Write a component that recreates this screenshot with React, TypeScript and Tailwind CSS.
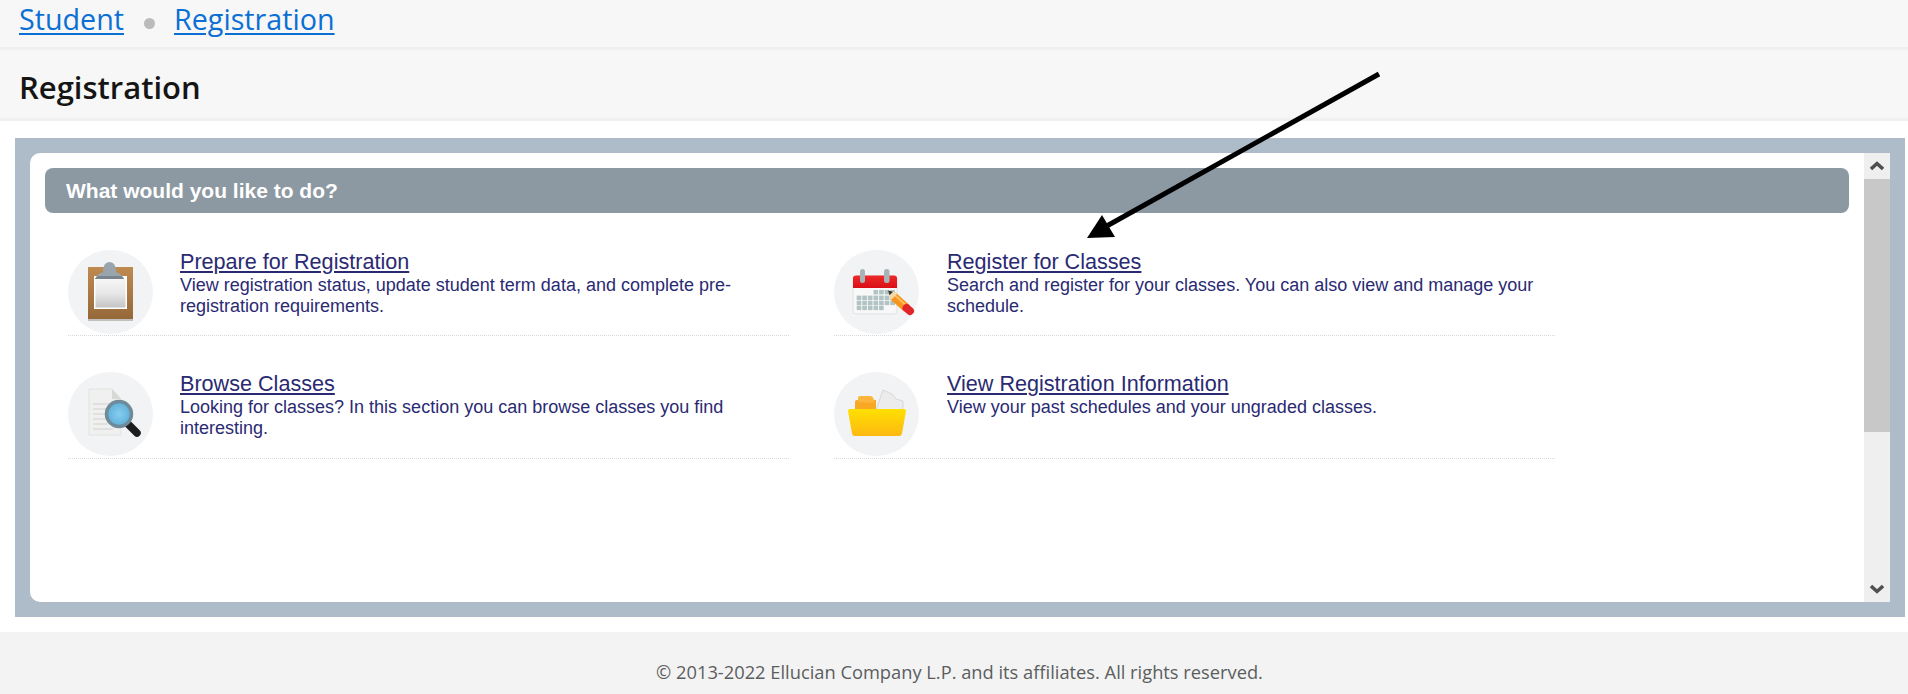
const items = [
  {
    title: "Prepare for Registration",
    desc: "View registration status, update student term data, and complete pre-registration requirements.",
    icon: "clipboard",
  },
  {
    title: "Register for Classes",
    desc: "Search and register for your classes. You can also view and manage your schedule.",
    icon: "calendar",
  },
  {
    title: "Browse Classes",
    desc: "Looking for classes? In this section you can browse classes you find interesting.",
    icon: "browse",
  },
  {
    title: "View Registration Information",
    desc: "View your past schedules and your ungraded classes.",
    icon: "folder",
  },
];

function ClipboardIcon() {
  return (
    <svg viewBox="0 0 85 84" className="w-[85px] h-[84px]">
      <defs>
        <linearGradient id="board" x1="0" y1="0" x2="0" y2="1">
          <stop offset="0" stopColor="#c08a50" />
          <stop offset="1" stopColor="#95683a" />
        </linearGradient>
        <linearGradient id="paper" x1="0" y1="0" x2="0" y2="1">
          <stop offset="0" stopColor="#f8f8f8" />
          <stop offset="0.55" stopColor="#e6e6e6" />
          <stop offset="1" stopColor="#c4c4c4" />
        </linearGradient>
      </defs>
      <rect x="20" y="69" width="45" height="2" fill="#8a8478" opacity="0.45" />
      <rect x="20" y="17" width="45" height="52" fill="url(#board)" />
      <rect x="26" y="26" width="33" height="33" fill="#fff" />
      <rect x="27.5" y="27.5" width="30" height="30" fill="url(#paper)" />
      <path d="M27 29 Q29 24 35 22 Q35 12 41.500 12 Q48 12 48 22 Q54 24 56 29 Z" fill="#99a4ad" />
      <path d="M27 29 Q28 27 30 26 H53 Q55 27 56 29 Z" fill="#79848d" />
    </svg>
  );
}

function BrowseIcon() {
  return (
    <svg viewBox="0 0 85 84" className="w-[85px] h-[84px]">
      <defs>
        <radialGradient id="lens">
          <stop offset="0" stopColor="#86cdf0" />
          <stop offset="1" stopColor="#5eaed8" />
        </radialGradient>
      </defs>
      <path d="M21 17 H44 L53 27 V63 H21 Z" fill="#eff0ef" stroke="#e2e2e0" strokeWidth="1" />
      <path d="M44 17 V27 H53 Z" fill="#d7d8d6" />
      <path d="M25 32 H45 M25 37 H40 M25 42 H38 M25 47 H38 M25 52 H40 M25 57 H45" stroke="#dcdcda" strokeWidth="1.500" />
      <path d="M60 52 L69 61" stroke="#1d1d1d" strokeWidth="7.500" strokeLinecap="round" />
      <circle cx="51" cy="42" r="12.500" fill="url(#lens)" stroke="#6f8a98" strokeWidth="3.500" />
    </svg>
  );
}

const calendarRows = [
  { y: 40, from: 3, to: 6 },
  { y: 45.6, from: 0, to: 6 },
  { y: 50.7, from: 0, to: 6 },
  { y: 55.7, from: 0, to: 4 },
];

function CalendarIcon() {
  return (
    <svg viewBox="0 0 85 84" className="w-[85px] h-[84px]">
      <defs>
        <linearGradient id="red" x1="0" y1="0" x2="0" y2="1">
          <stop offset="0" stopColor="#ee2a2a" />
          <stop offset="1" stopColor="#d90f15" />
        </linearGradient>
      </defs>
      <rect x="19" y="26" width="44" height="38" rx="3" fill="#f8f8f8" stroke="#dfe2e2" strokeWidth="1" />
      <path d="M19 38 V28 Q19 25.500 22 25.500 H60 Q63 25.500 63 28 V38 Z" fill="url(#red)" />
      <rect x="26" y="19" width="5" height="14" rx="2.500" fill="#a9b4b9" />
      <rect x="50" y="19" width="5.500" height="14" rx="2.500" fill="#a9b4b9" />
      <g fill="#b1c4c3">
        {calendarRows.map((row) =>
          Array.from({ length: row.to - row.from + 1 }, (_, i) => (
            <rect key={`${row.y}-${i}`} x={22.7 + (row.from + i) * 5.6} y={row.y} width="4.600" height="4.400" />
          )),
        )}
      </g>
      <path d="M59 46 L73 58.500" stroke="#f7941e" strokeWidth="8.500" />
      <path d="M60 44.500 L74 57" stroke="#ffc05c" strokeWidth="2" />
      <path d="M72.500 58 L76 61" stroke="#e0262c" strokeWidth="8" strokeLinecap="round" />
      <path d="M54 40.500 L64 43 L57 50 Z" fill="#f3d9a8" />
      <path d="M54 40.500 L59 41.700 L55.500 45.200 Z" fill="#333" />
    </svg>
  );
}

function FolderIcon() {
  return (
    <svg viewBox="0 0 85 84" className="w-[85px] h-[84px]">
      <defs>
        <linearGradient id="folder" x1="0" y1="0" x2="0" y2="1">
          <stop offset="0" stopColor="#ffe000" />
          <stop offset="1" stopColor="#fdb913" />
        </linearGradient>
      </defs>
      <path d="M21 40 V30 Q21 28 23 28 H42 V40 Z" fill="#f9a825" />
      <path d="M24 30 V26 Q24 24 26 24 H36 Q39 24 40 28 V31 Z" fill="#fbb53a" />
      <path d="M42 38 L49 18 L58 22 L62 27 L69 29 L69 40 Z" fill="#ececec" stroke="#d8d8d8" strokeWidth="1" />
      <path d="M14 39 Q14 37 16 37 H70 Q72 37 72 39 L68 61.500 Q67.500 64 65 64 H21 Q18.500 64 18 61.500 Z" fill="url(#folder)" />
    </svg>
  );
}

function ItemIcon({ icon }: { icon: string }) {
  if (icon === "clipboard") return <ClipboardIcon />;
  if (icon === "calendar") return <CalendarIcon />;
  if (icon === "browse") return <BrowseIcon />;
  return <FolderIcon />;
}

export default function App() {
  return (
    <div className="relative w-full h-[694px] overflow-hidden bg-white font-['Open_Sans',sans-serif]">
      {/* breadcrumb */}
      <div className="h-[50px] bg-[#f7f7f7] border-b-[3px] border-[#efefef] pl-[19px] flex items-center gap-[19.5px] text-[28.7px] text-[#0b6fd3] pb-[9px]">
        <a className="underline underline-offset-[3px] decoration-[1.5px]">Student</a>
        <span className="w-[11px] h-[11px] rounded-full bg-[#bbbbbb] mt-[8px]" />
        <a className="underline underline-offset-[3px] decoration-[1.5px]">Registration</a>
      </div>
      <div className="h-[71px] bg-[#f7f7f7] border-b-[3px] border-[#efefef] pl-[19px] flex items-center pt-[6px]">
        <h1 className="text-[31px] font-semibold text-[#151515]">Registration</h1>
      </div>

      {/* panel */}
      <div className="mt-[17px] ml-[15px] mr-[3px] h-[479px] bg-[#aebbc8] p-[15px]">
        <div className="h-full flex bg-white rounded-l-[10px] overflow-hidden">
          <div className="flex-1 pl-[15px] pr-[15px] pt-[15px] font-['Liberation_Sans',sans-serif]">
            <div className="h-[45px] bg-[#8c99a2] rounded-[8px] pl-[21px] flex items-center text-white font-bold text-[21px]">
              What would you like to do?
            </div>
            <div className="grid grid-cols-[721px_721px] grid-rows-[86px_87px] gap-x-[45px] gap-y-[36px] ml-[23px] mt-[37px]">
              {items.map((item) => (
                <div key={item.title} className="flex border-b border-dotted border-[#d9d9d9]">
                  <div className="w-[85px] h-[84px] rounded-full bg-[#f2f3f5] shrink-0">
                    <ItemIcon icon={item.icon} />
                  </div>
                  <div
                    className={
                      item.icon === "calendar" || item.icon === "folder"
                        ? "ml-[28px] -mt-[1px] w-[600px] text-[#2a2a72]"
                        : "ml-[27px] -mt-[1px] w-[600px] text-[#2a2a72]"
                    }
                  >
                    <a className="block text-[21.6px] leading-[26px] underline">{item.title}</a>
                    <p className="text-[18px] leading-[21px]">{item.desc}</p>
                  </div>
                </div>
              ))}
            </div>
          </div>
          {/* scrollbar */}
          <div className="w-[26px] shrink-0 bg-[#efefef] flex flex-col justify-between">
            <div>
              <div className="h-[26px] flex items-center justify-center">
                <svg viewBox="0 0 14 10" className="w-[14px] h-[10px]">
                  <path d="M1 8 L7 2.500 L13 8" fill="none" stroke="#505050" strokeWidth="3.500" />
                </svg>
              </div>
              <div className="h-[253px] bg-[#c8c8c8]" />
            </div>
            <div className="h-[26px] flex items-center justify-center">
              <svg viewBox="0 0 14 10" className="w-[14px] h-[10px]">
                <path d="M1 2 L7 7.500 L13 2" fill="none" stroke="#505050" strokeWidth="3.500" />
              </svg>
            </div>
          </div>
        </div>
      </div>

      {/* footer */}
      <div className="mt-[15px] h-[62px] bg-[#f3f3f3] flex items-center justify-center pt-[18px] pl-[11px] text-[18.3px] text-[#5b5e5f]">
        © 2013-2022 Ellucian Company L.P. and its affiliates. All rights reserved.
      </div>

      {/* annotation arrow drawn on top of the page */}
      <svg className="absolute left-0 top-0 w-[1908px] h-[694px] pointer-events-none" viewBox="0 0 1908 694">
        <path d="M1379 74 L1105 227" stroke="#000" strokeWidth="5" />
        <path d="M1102 215 L1087 238 L1115 237 Z" fill="#000" />
      </svg>
    </div>
  );
}
